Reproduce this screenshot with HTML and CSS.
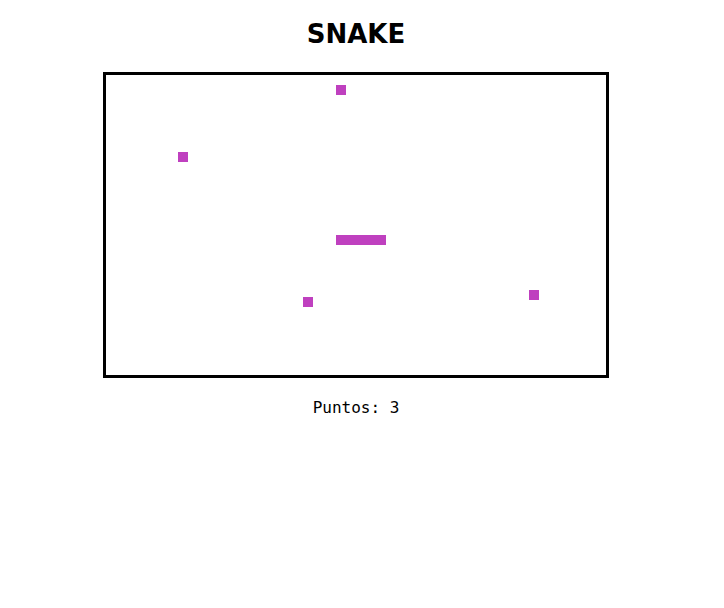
FILE: index.html
```html
<!DOCTYPE html>
<html lang="es">
<head>
<meta charset="utf-8">
<title>Snake</title>
<link rel="stylesheet" href="styles.css">
</head>
<body>
<main class="game">
  <h1 class="title">SNAKE</h1>
  <div class="board">
    <div class="cell food" style="left:230px;top:10px"></div>
    <div class="cell food" style="left:72px;top:77px"></div>
    <div class="cell food" style="left:197px;top:222px"></div>
    <div class="cell food" style="left:423px;top:215px"></div>
    <div class="cell snake" style="left:230px;top:160px;width:50px"></div>
  </div>
  <p class="score">Puntos: 3</p>
</main>
</body>
</html>
```
FILE: styles.css
```css
html, body {
  margin: 0;
  padding: 0;
  background: #fff;
}
.game {
  width: 712px;
  display: flex;
  flex-direction: column;
  align-items: center;
  font-family: "DejaVu Sans", sans-serif;
}
.title {
  margin: 17px 0 0;
  font-size: 26px;
  font-weight: bold;
  line-height: 34px;
  color: #000;
}
.board {
  position: relative;
  margin-top: 21px;
  width: 500px;
  height: 300px;
  border: 3px solid #000;
}
.cell {
  position: absolute;
  width: 10px;
  height: 10px;
  background: #bf40bf;
}
.score {
  margin: 21px 0 0;
  font-family: "DejaVu Sans Mono", monospace;
  font-size: 16px;
  line-height: 18px;
  color: #000;
}
```
